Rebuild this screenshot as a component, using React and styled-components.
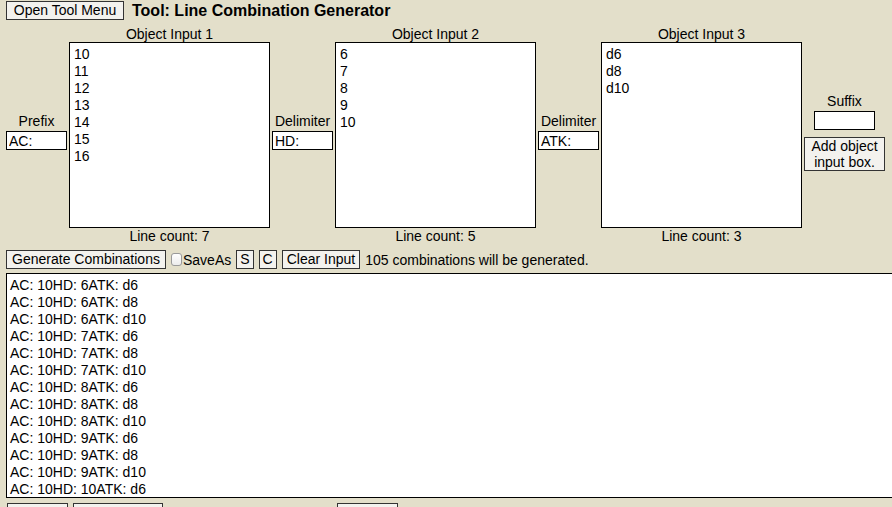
import React from 'react';
import styled, { createGlobalStyle } from 'styled-components';

const GlobalStyle = createGlobalStyle`
  html, body {
    margin: 0;
    background: #e3dfca;
    overflow: hidden;
  }
  body {
    font-family: "Liberation Sans", Arial, sans-serif;
    font-size: 14px;
    color: #000;
  }
`;

const Page = styled.div`
  padding: 1px 0 0 6px;
  width: 920px;
`;

const Header = styled.div`
  display: flex;
  align-items: center;
  gap: 8px;
  height: 19px;
`;

const Title = styled.span`
  font-weight: bold;
  font-size: 16px;
`;

const Btn = styled.button`
  font-family: inherit;
  font-size: 14px;
  height: 19px;
  line-height: 17px;
  padding: 0 ${(p) => (p.$tight ? 3 : 4)}px;
  margin: 0;
  border: 1px solid #333;
  border-radius: 0;
  background: #f3f2ee;
  color: #000;
  width: ${(p) => (p.$w ? `${p.$w}px` : 'auto')};
`;

const InputsRow = styled.div`
  display: flex;
  align-items: center;
  gap: 2px;
  margin-top: 6px;
`;

const SideGroup = styled.div`
  display: flex;
  flex-direction: column;
  align-items: center;
  gap: 2px;
  margin-bottom: 7px;
`;

const Label = styled.div`
  line-height: 16px;
  text-align: center;
`;

const Field = styled.input`
  box-sizing: border-box;
  width: 61px;
  height: 19px;
  border: 1px solid #000;
  background: #fff;
  font-family: inherit;
  font-size: 14px;
  padding: 0 2px;
  margin: 0;
  outline: none;
`;

const Column = styled.div`
  display: flex;
  flex-direction: column;
  align-items: center;
`;

const Area = styled.textarea`
  box-sizing: border-box;
  width: ${(p) => p.$w}px;
  height: ${(p) => p.$h}px;
  border: 1px solid #000;
  background: #fff;
  font-family: inherit;
  font-size: 14px;
  line-height: 17px;
  padding: ${(p) => p.$pad};
  margin: 0;
  resize: none;
  overflow: hidden;
  outline: none;
  color: #000;
  display: block;
`;

const AddButton = styled(Btn)`
  height: 34px;
  width: 81px;
  line-height: 16px;
  padding: 0 2px;
  margin-top: 5px;
  white-space: normal;
`;

const ControlsRow = styled.div`
  display: flex;
  align-items: center;
  gap: 5px;
  margin-top: 6px;
`;

const CheckLabel = styled.label`
  display: flex;
  align-items: center;
  gap: 1px;
`;

const Check = styled.span`
  display: inline-block;
  width: 9px;
  height: 11px;
  border: 1px solid #9a9a9a;
  border-radius: 3px;
  background: linear-gradient(#fff, #ececec);
`;

const Output = styled(Area)`
  margin-top: 4px;
`;

const BottomRow = styled.div`
  display: flex;
  gap: 5px;
  margin-top: 5px;
  margin-left: 1px;
`;

const Spacer = styled.div`
  width: ${(p) => p.$w}px;
`;

const cols = [
  { title: 'Object Input 1', values: ['10', '11', '12', '13', '14', '15', '16'] },
  { title: 'Object Input 2', values: ['6', '7', '8', '9', '10'] },
  { title: 'Object Input 3', values: ['d6', 'd8', 'd10'] },
];

const seps = [
  { label: 'Prefix', value: 'AC:' },
  { label: 'Delimiter', value: 'HD:' },
  { label: 'Delimiter', value: 'ATK:' },
];

function buildLines() {
  const out = [];
  for (const a of cols[0].values)
    for (const b of cols[1].values)
      for (const c of cols[2].values)
        out.push(`AC: ${a}HD: ${b}ATK: ${c}`);
  return out;
}

export default function App() {
  const lines = buildLines();
  return (
    <Page>
      <GlobalStyle />
      <Header>
        <Btn $w={118}>Open Tool Menu</Btn>
        <Title>Tool: Line Combination Generator</Title>
      </Header>

      <InputsRow>
        {cols.map((col, i) => (
          <React.Fragment key={col.title}>
            <SideGroup>
              <Label>{seps[i].label}</Label>
              <Field defaultValue={seps[i].value} />
            </SideGroup>
            <Column>
              <Label>{col.title}</Label>
              <Area
                $w={201}
                $h={186}
                $pad="3px 4px"
                readOnly
                defaultValue={col.values.join('\n')}
              />
              <Label>Line count: {col.values.length}</Label>
            </Column>
          </React.Fragment>
        ))}
        <SideGroup>
          <Label>Suffix</Label>
          <Field />
          <AddButton>Add object input box.</AddButton>
        </SideGroup>
      </InputsRow>

      <ControlsRow>
        <Btn $w={160}>Generate Combinations</Btn>
        <CheckLabel>
          <Check />
          SaveAs
        </CheckLabel>
        <Btn $tight>S</Btn>
        <Btn $tight>C</Btn>
        <Btn>Clear Input</Btn>
        <span>{lines.length} combinations will be generated.</span>
      </ControlsRow>

      <Output
        $w={910}
        $h={225}
        $pad="3px 3px"
        readOnly
        defaultValue={lines.join('\n')}
      />

      <BottomRow>
        <Btn $w={61} aria-label="Save" />
        <Btn $w={90} aria-label="Copy output" />
        <Spacer $w={164} />
        <Btn $w={61} aria-label="Clear output" />
      </BottomRow>
    </Page>
  );
}
